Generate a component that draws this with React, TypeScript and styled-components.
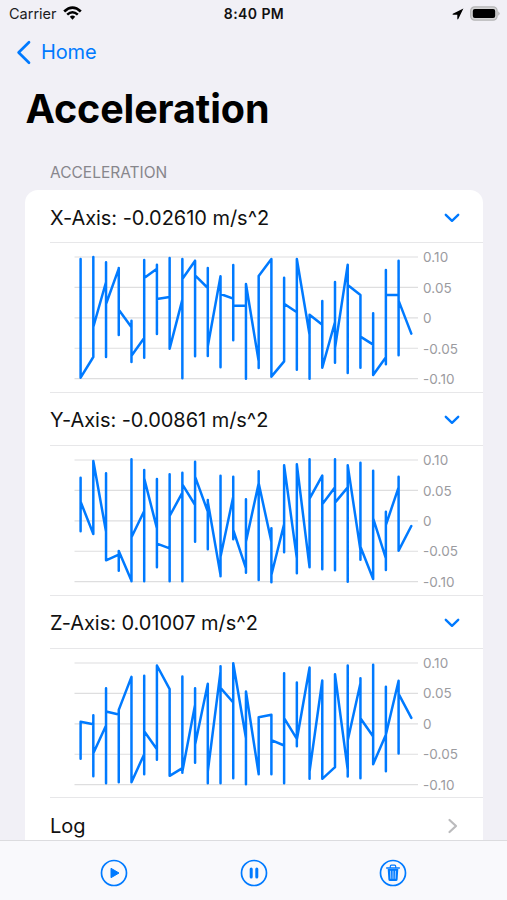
import React from "react";
import styled, { createGlobalStyle } from "styled-components";

const BLUE = "#007aff";

const GlobalStyle = createGlobalStyle`
  * { box-sizing: border-box; }
  body {
    margin: 0;
    background: #f1f0f6;
    font-family: Inter, "Liberation Sans", sans-serif;
    color: #000;
    overflow: hidden;
  }
`;

const Screen = styled.div`
  width: 507px;
  height: 900px;
  display: flex;
  flex-direction: column;
  background: #f1f0f6;
  overflow: hidden;
`;

const StatusBar = styled.header`
  height: 27px;
  flex: none;
  display: grid;
  grid-template-columns: 1fr auto 1fr;
  align-items: center;
  padding: 0 7px 0 9px;
  font-size: 14.5px;
  line-height: 27px;
`;

const StatusSide = styled.div<{ $end?: boolean }>`
  display: flex;
  align-items: center;
  justify-content: ${(p) => (p.$end ? "flex-end" : "flex-start")};
  gap: 6px;
  height: 27px;
  color: #1c1c1e;
`;

const Clock = styled.time`
  font-weight: 600;
  font-size: 14px;
  letter-spacing: 0.42px;
  padding-right: 1px;
  color: #111;
`;

const BackLink = styled.button`
  flex: none;
  height: 51px;
  align-self: flex-start;
  display: flex;
  align-items: center;
  gap: 9px;
  padding: 0 0 0 16px;
  border: 0;
  background: none;
  color: ${BLUE};
  font: 400 20px/51px Inter, sans-serif;
  letter-spacing: -0.15px;
`;

const Title = styled.h1`
  flex: none;
  margin: 0;
  height: 62px;
  padding: 0 0 0 25.5px;
  font-size: 39.5px;
  font-weight: 700;
  line-height: 62px;
  letter-spacing: -0.12px;
`;

const SectionLabel = styled.h2`
  flex: none;
  margin: 0;
  height: 50px;
  padding: 22px 0 0 50px;
  font-size: 15.5px;
  font-weight: 400;
  line-height: 22px;
  letter-spacing: 0;
  color: #87868c;
`;

const Card = styled.main`
  flex: 1;
  min-height: 0;
  overflow: hidden;
  margin: 0 24.5px;
  padding-left: 25.5px;
  border-radius: 13px 13px 0 0;
  background: #fff;
`;

const Row = styled.div`
  height: 53.3px;
  display: flex;
  align-items: center;
  justify-content: space-between;
  padding: 3px 23px 0 0;
  border-bottom: 1px solid #e7e7e9;
  font-size: 20px;
  line-height: 30px;
  letter-spacing: -0.04px;
  color: #111;
`;

const ChartRow = styled.div`
  height: 149.5px;
  display: flex;
  padding-top: 6px;
  border-bottom: 1px solid #e7e7e9;
`;

const Plot = styled.svg`
  flex: none;
  width: 346px;
  height: 140px;
  margin-left: 24px;
`;

const Scale = styled.div`
  display: flex;
  flex-direction: column;
  padding: 0 0 0 3px;
  margin-top: -7px;
  font-size: 13.5px;
  line-height: 30.45px;
  letter-spacing: 0.1px;
  color: #9b9b9f;
`;

const Toolbar = styled.footer`
  height: 60px;
  flex: none;
  display: grid;
  grid-template-columns: repeat(3, 139.5px);
  justify-content: center;
  border-top: 1px solid #dcdcdf;
  background: #f9f9fc;
`;

const ToolButton = styled.button`
  display: flex;
  align-items: flex-start;
  justify-content: center;
  border: 0;
  padding: 18px 0 0;
  background: none;
  color: ${BLUE};
`;

/* top, bottom, entry and exit offsets for each sample, in thirds of a pixel */
type Sample = [number, number, number, number];

interface Axis {
  label: string;
  base: number;
  samples: Sample[];
  last: number;
}

const axes: Axis[] = [
  {
    label: "X-Axis: -0.02610 m/s^2",
    base: 37,
    last: 267,
    samples: [
      [43, 399, 43, 399], [37, 337, 337, 247], [53, 337, 112, 178], [70, 271, 72, 195],
      [228, 352, 248, 333], [46, 339, 280, 100], [60, 268, 72, 163], [40, 312, 157, 312],
      [43, 401, 165, 103], [48, 335, 48, 92], [70, 334, 130, 305], [95, 368, 95, 148],
      [61, 287, 162, 183], [118, 402, 183, 118], [94, 370, 350, 94], [43, 396, 43, 396],
      [99, 350, 350, 177], [43, 375, 203, 43], [210, 402, 270, 210], [169, 369, 240, 369],
      [112, 354, 232, 310], [60, 385, 60, 121], [151, 369, 151, 276], [206, 391, 300, 391],
      [76, 359, 338, 150], [48, 332, 151, 168],
    ],
  },
  {
    label: "Y-Axis: -0.00861 m/s^2",
    base: 30,
    last: 228,
    samples: [
      [83, 244, 244, 155], [33, 252, 252, 33], [70, 331, 245, 331], [303, 362, 314, 303],
      [28, 394, 392, 262], [60, 394, 183, 85], [87, 352, 235, 281], [73, 394, 295, 198],
      [68, 394, 128, 103], [35, 275, 165, 80], [150, 298, 185, 155], [77, 379, 375, 320],
      [80, 268, 140, 240], [148, 368, 355, 275], [64, 390, 100, 100], [235, 397, 275, 375],
      [46, 307, 222, 46], [43, 370, 325, 43], [28, 352, 352, 146], [77, 358, 77, 163],
      [28, 361, 112, 158], [46, 395, 112, 46], [38, 329, 300, 290], [62, 387, 387, 205],
      [185, 360, 325, 225], [80, 302, 112, 302],
    ],
  },
  {
    label: "Z-Axis: 0.01007 m/s^2",
    base: 29.5,
    last: 194,
    samples: [
      [206, 317, 317, 206], [186, 369, 213, 300], [105, 390, 217, 175], [170, 387, 184, 170],
      [71, 387, 71, 387], [68, 363, 303, 234], [37, 320, 288, 37], [108, 368, 108, 368],
      [70, 359, 345, 355], [105, 329, 155, 275], [92, 390, 92, 355], [39, 390, 55, 104],
      [30, 375, 148, 30], [115, 393, 255, 115], [192, 363, 363, 192], [185, 363, 185, 261],
      [60, 390, 277, 195], [88, 279, 257, 260], [43, 377, 43, 355], [82, 377, 82, 377],
      [63, 342, 342, 63], [37, 370, 350, 262], [75, 375, 90, 195], [35, 333, 250, 333],
      [101, 354, 245, 245], [83, 301, 83, 122],
    ],
  },
];

const STEP = 12.72;
const LEFT = 6.6;
const TOP = 8;
const ticks = ["0.10", "0.05", "0", "-0.05", "-0.10"];

function tracePath({ samples, base, last }: Axis) {
  const y = (v: number) => (TOP + (v - base) / 3).toFixed(2);
  const x = (i: number) => (LEFT + i * STEP).toFixed(2);
  const parts = samples.map(
    ([top, bottom, enter, exit], i) =>
      `${i ? "L" : "M"}${x(i)} ${y(enter)}V${y(top)}V${y(bottom)}V${y(exit)}`
  );
  return `${parts.join("")}L${x(samples.length)} ${y(last)}`;
}

function Chart({ axis }: { axis: Axis }) {
  return (
    <ChartRow>
      <Plot viewBox="0 0 346 140">
        {ticks.map((t, i) => (
          <path key={t} d={`M.5 ${TOP + i * 30.42}H344`} stroke="#dededf" strokeWidth="1.2" />
        ))}
        <path
          d={tracePath(axis)}
          fill="none"
          stroke={BLUE}
          strokeWidth="2.5"
          strokeLinecap="round"
          strokeLinejoin="round"
        />
      </Plot>
      <Scale>
        {ticks.map((t) => (
          <span key={t}>{t}</span>
        ))}
      </Scale>
    </ChartRow>
  );
}

const WifiIcon = () => (
  <svg width="19" height="15" viewBox="0 0 19 15" fill="none" stroke="#000">
    <path d="M1.2 5.5Q9.5-2.2 17.8 5.5" strokeWidth="2.7" />
    <path d="M4.2 8.7Q9.5 3.8 14.8 8.7" strokeWidth="2.5" />
    <path d="M6.8 10.8Q9.5 8.4 12.2 10.8L9.5 13.8Z" fill="#000" stroke="none" />
  </svg>
);

const LocationIcon = () => (
  <svg width="12" height="12" viewBox="0 0 12 12">
    <path d="M11.4.5 6.3 11.1Q5.5 11.8 5.3 10.8V6.7H1.1Q0 6.5.8 5.7Z" fill="#000" />
  </svg>
);

const BatteryIcon = () => (
  <svg width="30" height="15" viewBox="0 0 30 15">
    <rect x=".7" y=".9" width="26.4" height="13.2" rx="4" fill="#d4d4d5" stroke="#b4b4b5" strokeWidth="1.3" />
    <rect x="2.8" y="2.9" width="22.4" height="9.2" rx="2" fill="#000" />
    <path d="M28.3 5.2Q30.9 7.5 28.3 9.8Z" fill="#aaa" />
  </svg>
);

const BackIcon = () => (
  <svg width="16" height="25" viewBox="0 0 16 25" fill="none">
    <path d="M13 2.2 2.6 12.5 13 22.8" stroke={BLUE} strokeWidth="2.7" strokeLinecap="round" strokeLinejoin="round" />
  </svg>
);

const DownIcon = () => (
  <svg width="16" height="10" viewBox="0 0 16 10" fill="none">
    <path d="M1.8 1.8 8 7.8 14.2 1.8" stroke={BLUE} strokeWidth="2.4" strokeLinecap="round" strokeLinejoin="round" />
  </svg>
);

const NextIcon = () => (
  <svg width="15" height="16" viewBox="0 0 15 16" fill="none">
    <path d="M4.5 2 11 8 4.5 14" stroke="#bbbbbd" strokeWidth="2.2" strokeLinecap="round" strokeLinejoin="round" />
  </svg>
);

const Ring = ({ children }: { children: React.ReactNode }) => (
  <svg width="28" height="28" viewBox="0 0 28 28" fill="none" stroke={BLUE}>
    <circle cx="14" cy="14" r="12.5" strokeWidth="1.7" />
    {children}
  </svg>
);

export default function App() {
  return (
    <>
      <GlobalStyle />
      <Screen>
        <StatusBar>
          <StatusSide>
            <span>Carrier</span>
            <WifiIcon />
          </StatusSide>
          <Clock>8:40 PM</Clock>
          <StatusSide $end>
            <LocationIcon />
            <BatteryIcon />
          </StatusSide>
        </StatusBar>
        <BackLink>
          <BackIcon />
          Home
        </BackLink>
        <Title>Acceleration</Title>
        <SectionLabel>ACCELERATION</SectionLabel>
        <Card>
          {axes.map((axis) => (
            <React.Fragment key={axis.label}>
              <Row>
                <span>{axis.label}</span>
                <DownIcon />
              </Row>
              <Chart axis={axis} />
            </React.Fragment>
          ))}
          <Row>
            <span>Log</span>
            <NextIcon />
          </Row>
        </Card>
        <Toolbar>
          <ToolButton aria-label="Play">
            <Ring>
              <path d="M11 9.3v9.4l8-4.7Z" fill={BLUE} strokeWidth="1" strokeLinejoin="round" />
            </Ring>
          </ToolButton>
          <ToolButton aria-label="Pause">
            <Ring>
              <path d="M11.2 10v8M16.8 10v8" strokeWidth="3" strokeLinecap="round" />
            </Ring>
          </ToolButton>
          <ToolButton aria-label="Delete">
            <Ring>
              <path d="M7.7 9.1H20.3" strokeWidth="1.5" strokeLinecap="round" />
              <path d="M11.3 9V7.2Q11.3 6.2 12.3 6.2h3.4q1 0 1 1V9" strokeWidth="1.2" />
              <path d="M8.7 10h10.6l-.7 10.4q-.1 1.5-1.6 1.5h-6q-1.5 0-1.6-1.5Z" fill={BLUE} stroke="none" />
              <path d="m11.5 11.8.3 8M14 11.8v8m2.5-8-.3 8" stroke="#cfe4ff" strokeWidth=".8" />
            </Ring>
          </ToolButton>
        </Toolbar>
      </Screen>
    </>
  );
}
